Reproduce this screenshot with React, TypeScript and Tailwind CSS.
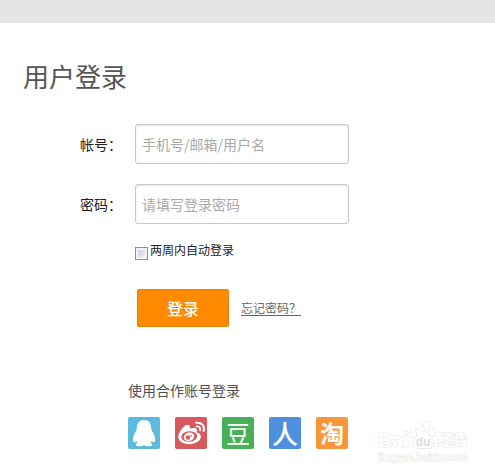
import type { ReactNode } from "react";

const PARTNERS: { name: string; color: string; icon: ReactNode }[] = [
  { name: "QQ", color: "bg-[#5bbadd]", icon: <QQIcon /> },
  { name: "微博", color: "bg-[#d65a5d]", icon: <WeiboIcon /> },
  { name: "豆瓣", color: "bg-[#48b058]", icon: <span className="text-2xl leading-9">豆</span> },
  { name: "人人", color: "bg-[#4f8fe0]", icon: <span className="text-[26px] leading-10 font-medium">人</span> },
  { name: "淘宝", color: "bg-[#fb953a]", icon: <span className="text-2xl leading-9 font-bold">淘</span> },
];

function QQIcon() {
  return (
    <svg viewBox="0 0 32 32" className="h-8 w-8" fill="#fff" aria-hidden>
      <path d="M16 3c-4.600 0-7.200 3.400-7.200 7.800 0 1.700-.6 2.700-1.400 4.200-1.500 2.800-2.600 5.300-2.600 7.500 0 1.700.5 2.800 1.300 2.800.9 0 1.500-.6 2.100-1.400.3.900.8 1.600 1.400 2.200-1.200.5-1.900 1.100-1.900 1.700 0 1 1.800 1.500 4.100 1.500 1.800 0 3.300-.4 4.200-1.100.9.700 2.400 1.100 4.200 1.100 2.300 0 4.100-.5 4.100-1.500 0-.6-.7-1.200-1.900-1.700.6-.6 1.100-1.300 1.400-2.200.6.800 1.200 1.400 2.100 1.400.8 0 1.300-1.100 1.300-2.800 0-2.200-1.100-4.700-2.600-7.500-.8-1.500-1.400-2.500-1.400-4.200C23.200 6.400 20.600 3 16 3Z" />
    </svg>
  );
}

function WeiboIcon() {
  return (
    <svg viewBox="0 0 32 32" className="h-8 w-8" aria-hidden>
      <path
        fill="#fff"
        d="M13 7.800c1.900.2 2.300 1.900 1.700 4 2.700-1 5.900-1.300 6.900.4.500.8.400 1.900 0 3.100 2.400.7 4.300 1.900 4.300 4.200 0 4.200-5.400 7.700-11.700 7.700C7.800 27.200 3.300 24.200 3.300 19.800c0-4.400 6-12.400 9.700-12Z"
      />
      <ellipse cx="14.200" cy="19.500" rx="8" ry="5.300" fill="#d65a5d" transform="rotate(-6 14.200 19.500)" />
      <ellipse cx="14" cy="19.800" rx="5.300" ry="4.200" fill="#fff" transform="rotate(-18 14 19.800)" />
      <circle cx="13" cy="20.500" r="2.200" fill="#d65a5d" />
      <circle cx="16" cy="18.700" r="0.900" fill="#d65a5d" />
      <g fill="none" stroke="#fff" strokeLinecap="round">
        <path d="M21.200 5.800c5-1 9 3.200 7.400 8.200" strokeWidth="2" />
        <path d="M21.600 9.500c2.400-.4 4.200 1.400 3.500 3.800" strokeWidth="1.800" />
      </g>
    </svg>
  );
}

function Field({ id, label, type, placeholder }: { id: string; label: string; type: string; placeholder: string }) {
  return (
    <div className="flex items-center gap-[13px]">
      <label htmlFor={id} className="w-[42px] shrink-0 whitespace-nowrap text-sm text-[#222]">
        {label}
      </label>
      <input
        id={id}
        type={type}
        placeholder={placeholder}
        className="h-10 w-full max-w-[214px] rounded-[3px] border border-[#c8c8c8] bg-white px-1.5 text-sm text-[#333] shadow-[inset_0_1px_2px_#e4e4e4] outline-none placeholder:text-[#a9a9a9]"
      />
    </div>
  );
}

function Watermark() {
  return (
    <div
      aria-hidden
      className="pointer-events-none absolute right-7 bottom-2.5 flex flex-col items-end gap-px text-white [-webkit-text-stroke:1px_#e6e6e6] [paint-order:stroke_fill]"
    >
      <div className="flex items-end">
        <span className="font-['Liberation_Sans'] text-xl leading-5 font-bold">Bai</span>
        <svg viewBox="0 0 28 30" className="h-[30px] w-7" fill="#fff" stroke="#dedede" strokeWidth="1">
          <ellipse cx="4.500" cy="13" rx="2.800" ry="4" transform="rotate(-15 4.500 13)" />
          <ellipse cx="10" cy="5.500" rx="2.900" ry="4.300" />
          <ellipse cx="17.500" cy="5.500" rx="2.900" ry="4.300" transform="rotate(12 17.500 5.500)" />
          <ellipse cx="23.500" cy="12.500" rx="2.800" ry="3.800" transform="rotate(12 23.500 12.500)" />
          <path d="M14 11.500c-4 0-4.500 3.500-7.500 6-4.500 4-3 11 2.500 11 2 0 3-.5 5-.5s3.500.5 5.500.5c5.500 0 6.500-7 2-11-3-2.500-3.500-6-7.500-6Z" />
          <text
            x="14"
            y="26"
            textAnchor="middle"
            fill="#dcdcdc"
            className="font-['Liberation_Sans'] text-xs font-bold [-webkit-text-stroke:0] [stroke:none]"
          >
            du
          </text>
        </svg>
        <span className="text-[15px] leading-[22px] font-bold">经验</span>
      </div>
      <span className="font-['Liberation_Sans'] text-[11px] leading-3">jingyan.baidu.com</span>
    </div>
  );
}

export default function App() {
  return (
    <div className="relative min-h-screen bg-white font-['Noto_Sans_CJK_SC',sans-serif]">
      <header className="h-[23px] bg-[#e5e5e5]" />

      <main className="px-[23px] pt-[38px] pb-6">
        <h1 className="text-[26px] leading-[30px] text-[#555]">用户登录</h1>

        <form className="mt-[33px] pl-[57px]" onSubmit={(e) => e.preventDefault()}>
          <div className="flex flex-col gap-5">
            <Field id="account" label="帐号：" type="text" placeholder="手机号/邮箱/用户名" />
            <Field id="password" label="密码：" type="password" placeholder="请填写登录密码" />
          </div>

          <div className="mt-[17px] flex items-end gap-0.5 pl-[55px]">
            <input
              id="remember"
              type="checkbox"
              className="h-[13px] w-[13px] appearance-none border border-[#8e8f8f] bg-gradient-to-br from-[#c3c8d0] to-[#f6f6f6] shadow-[inset_0_0_0_2px_#f4f4f4] checked:bg-[#4a6a9a]"
            />
            <label htmlFor="remember" className="pb-px text-xs leading-[18px] text-[#222]">
              两周内自动登录
            </label>
          </div>

          <div className="mt-[29px] flex items-center gap-3 pl-[57px]">
            <button
              type="submit"
              className="h-[38px] w-[92px] rounded-xs border border-[#e98000] bg-[#ff8a00] text-base font-medium text-white"
            >
              登录
            </button>
            <a href="#" className="text-xs text-[#666] underline underline-offset-2">
              忘记密码？
            </a>
          </div>
        </form>

        <section className="mt-[53px] pl-[105px]">
          <h2 className="text-sm leading-5 text-[#505050]">使用合作账号登录</h2>
          <ul className="mt-[17px] flex gap-[15px]">
            {PARTNERS.map((p) => (
              <li key={p.name}>
                <a
                  href="#"
                  aria-label={p.name}
                  className={`flex h-8 w-8 items-center justify-center rounded-[2px] text-white ${p.color}`}
                >
                  {p.icon}
                </a>
              </li>
            ))}
          </ul>
        </section>
      </main>

      <Watermark />
    </div>
  );
}
